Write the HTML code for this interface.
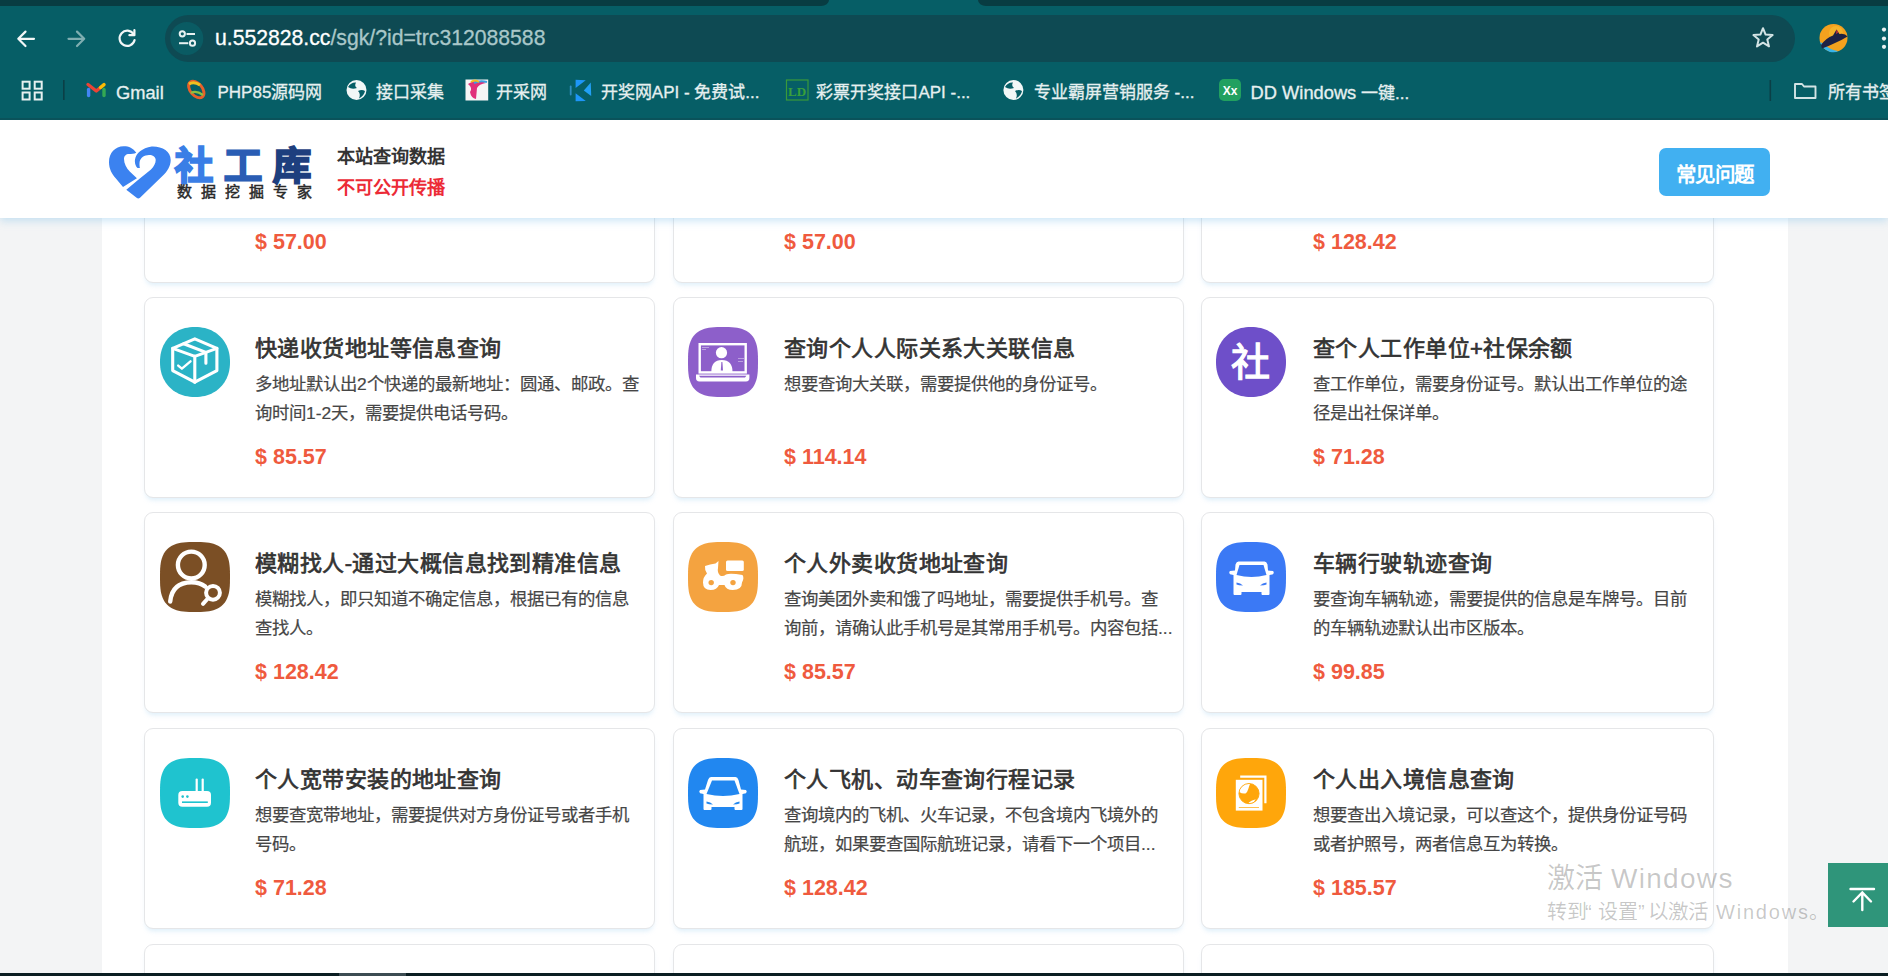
<!DOCTYPE html>
<html lang="zh-CN"><head><meta charset="utf-8"><style>
*{box-sizing:border-box;margin:0;padding:0}
html,body{width:1888px;height:976px;overflow:hidden}
body{position:relative;background:#f3f4f5;font-family:"Liberation Sans",sans-serif}
.a{position:absolute}
svg{display:block}
.card{position:absolute;width:511px;height:201px;border:1px solid #e5e6e8;border-radius:9px;background:#fff;box-shadow:0 4px 5px -2px rgba(170,212,240,.4)}
.card .ic{position:absolute;left:15px;top:29px;width:70px;height:70px}
.card .tt{position:absolute;left:110px;top:37px;font-size:22px;letter-spacing:0.42px;line-height:28px;font-weight:normal;-webkit-text-stroke:0.7px #333;color:#333;white-space:nowrap}
.card .ds{position:absolute;left:110px;font-size:17.4px;line-height:28px;color:#464646;-webkit-text-stroke:0.2px #464646;white-space:nowrap}
.card .pr{position:absolute;left:110px;top:145px;font-size:21.5px;line-height:28px;font-weight:bold;color:#ef5a3e;white-space:nowrap}
#chrome{left:0;top:0;width:1888px;height:120px;background:#065e66}
#tabs{left:0;top:0;width:829px;height:6px;background:#083c42;border-bottom-right-radius:8px 6px}
#tabgap{left:978px;top:0;width:910px;height:6px;background:#083c42;border-bottom-left-radius:8px 6px}
#pill{left:165px;top:15px;width:1630px;height:47px;border-radius:24px;background:#0e4a53}
#url{left:215px;top:23.5px;font-size:21.2px;line-height:28px;color:#fff;-webkit-text-stroke:0.3px #fff;white-space:nowrap}
#url span{color:#a9c7c9;-webkit-text-stroke:0.3px #a9c7c9}
.bm{position:absolute;top:82px;font-size:17px;line-height:22px;color:#e6f0f0;-webkit-text-stroke:0.3px #e6f0f0;white-space:nowrap}
#bmline{left:0;top:118px;width:1888px;height:2px;background:#0a525a}
#page{left:102px;top:120px;width:1686px;height:856px;background:#fff}
#header{left:0;top:120px;width:1888px;height:98px;background:#fff;box-shadow:0 3px 8px rgba(130,195,235,.4)}
#bottom{left:0;top:973px;width:1888px;height:3px;background:#0b1e22}
#bottom2{left:339px;top:973px;width:67px;height:3px;background:#3c4c52}
.h1{left:337px;font-size:18.1px;line-height:24px;font-weight:bold;white-space:nowrap}
#faq{left:1659px;top:148px;width:111px;height:48px;border-radius:7px;background:#41b0f1;color:#fff;font-size:20.5px;font-weight:bold;line-height:54px;letter-spacing:-0.5px;text-align:center}
#totop{left:1828px;top:863px;width:60px;height:64px;background:#2f957a}
.wm{color:rgba(0,0,0,.22);white-space:nowrap;left:1547px}
</style></head><body>
<div id="page" class="a"></div>
<div class="card" style="left:144px;top:82px;width:511px"><div class="pr" style="top:145px;left:110px">$ 57.00</div></div><div class="card" style="left:673px;top:82px;width:511px"><div class="pr" style="top:145px;left:110px">$ 57.00</div></div><div class="card" style="left:1201px;top:82px;width:513px"><div class="pr" style="top:145px;left:111px">$ 128.42</div></div><div class="card" style="left:144px;top:297px;width:511px"><div class="ic" style="left:15px"><svg width="70" height="70" viewBox="0 0 70 70"><path d="M70.00 35.00 L69.93 37.77 L69.72 40.27 L69.37 42.65 L68.89 44.95 L68.27 47.18 L67.51 49.32 L66.63 51.39 L65.62 53.37 L64.48 55.26 L63.22 57.06 L61.84 58.76 L60.35 60.35 L58.76 61.84 L57.06 63.22 L55.26 64.48 L53.37 65.62 L51.39 66.63 L49.32 67.51 L47.18 68.27 L44.95 68.89 L42.65 69.37 L40.27 69.72 L37.77 69.93 L35.00 70.00 L32.23 69.93 L29.73 69.72 L27.35 69.37 L25.05 68.89 L22.82 68.27 L20.68 67.51 L18.61 66.63 L16.63 65.62 L14.74 64.48 L12.94 63.22 L11.24 61.84 L9.65 60.35 L8.16 58.76 L6.78 57.06 L5.52 55.26 L4.38 53.37 L3.37 51.39 L2.49 49.32 L1.73 47.18 L1.11 44.95 L0.63 42.65 L0.28 40.27 L0.07 37.77 L0.00 35.00 L0.07 32.23 L0.28 29.73 L0.63 27.35 L1.11 25.05 L1.73 22.82 L2.49 20.68 L3.37 18.61 L4.38 16.63 L5.52 14.74 L6.78 12.94 L8.16 11.24 L9.65 9.65 L11.24 8.16 L12.94 6.78 L14.74 5.52 L16.63 4.38 L18.61 3.37 L20.68 2.49 L22.82 1.73 L25.05 1.11 L27.35 0.63 L29.73 0.28 L32.23 0.07 L35.00 0.00 L37.77 0.07 L40.27 0.28 L42.65 0.63 L44.95 1.11 L47.18 1.73 L49.32 2.49 L51.39 3.37 L53.37 4.38 L55.26 5.52 L57.06 6.78 L58.76 8.16 L60.35 9.65 L61.84 11.24 L63.22 12.94 L64.48 14.74 L65.62 16.63 L66.63 18.61 L67.51 20.68 L68.27 22.82 L68.89 25.05 L69.37 27.35 L69.72 29.73 L69.93 32.23Z" fill="#2bb3c6"/>
<g fill="none" stroke="#fff" stroke-width="3.1" stroke-linejoin="round" stroke-linecap="round">
<path d="M34.8 11.9 L56.9 21.4 L56.9 43.6 L34.8 55.2 L12.7 43.6 L12.7 21.4 Z"/>
<path d="M12.7 21.4 L34.8 29.4 L56.9 21.4 M34.8 29.4 L34.8 55.2"/>
<path d="M23.7 16.8 L45.9 25.4 L45.9 36.2"/>
<path d="M18.2 38.6 L21.9 41.7 L30.5 34.3" stroke-width="2.4"/>
</g></svg></div><div class="tt" style="left:110px">快递收货地址等信息查询</div><div class="ds" style="top:72.0px;left:110px">多地址默认出2个快递的最新地址：圆通、邮政。查</div><div class="ds" style="top:100.5px;left:110px">询时间1-2天，需要提供电话号码。</div><div class="pr" style="left:110px">$ 85.57</div></div><div class="card" style="left:673px;top:297px;width:511px"><div class="ic" style="left:14px"><svg width="70" height="70" viewBox="0 0 70 70"><path d="M70.00 35.00 L69.95 40.68 L69.80 44.01 L69.55 46.77 L69.20 49.21 L68.75 51.42 L68.20 53.45 L67.55 55.32 L66.80 57.05 L65.95 58.65 L64.99 60.14 L63.94 61.51 L62.78 62.78 L61.51 63.94 L60.14 64.99 L58.65 65.95 L57.05 66.80 L55.32 67.55 L53.45 68.20 L51.42 68.75 L49.21 69.20 L46.77 69.55 L44.01 69.80 L40.68 69.95 L35.00 70.00 L29.32 69.95 L25.99 69.80 L23.23 69.55 L20.79 69.20 L18.58 68.75 L16.55 68.20 L14.68 67.55 L12.95 66.80 L11.35 65.95 L9.86 64.99 L8.49 63.94 L7.22 62.78 L6.06 61.51 L5.01 60.14 L4.05 58.65 L3.20 57.05 L2.45 55.32 L1.80 53.45 L1.25 51.42 L0.80 49.21 L0.45 46.77 L0.20 44.01 L0.05 40.68 L0.00 35.00 L0.05 29.32 L0.20 25.99 L0.45 23.23 L0.80 20.79 L1.25 18.58 L1.80 16.55 L2.45 14.68 L3.20 12.95 L4.05 11.35 L5.01 9.86 L6.06 8.49 L7.22 7.22 L8.49 6.06 L9.86 5.01 L11.35 4.05 L12.95 3.20 L14.68 2.45 L16.55 1.80 L18.58 1.25 L20.79 0.80 L23.23 0.45 L25.99 0.20 L29.32 0.05 L35.00 0.00 L40.68 0.05 L44.01 0.20 L46.77 0.45 L49.21 0.80 L51.42 1.25 L53.45 1.80 L55.32 2.45 L57.05 3.20 L58.65 4.05 L60.14 5.01 L61.51 6.06 L62.78 7.22 L63.94 8.49 L64.99 9.86 L65.95 11.35 L66.80 12.95 L67.55 14.68 L68.20 16.55 L68.75 18.58 L69.20 20.79 L69.55 23.23 L69.80 25.99 L69.95 29.32Z" fill="#8d5fca"/>
<g fill="none" stroke="#fff" stroke-width="2.4">
<rect x="11.7" y="17.2" width="46" height="28.2"/>
</g>
<path d="M8 47.6 L61.4 47.6 L61.4 51 Q61.4 54.4 58 54.4 L11.4 54.4 Q8 54.4 8 51 Z" fill="#fff"/>
<path d="M11 48.8 L58.4 48.8 L57 50.6 L12.4 50.6 Z" fill="#8d5fca"/>
<circle cx="33.5" cy="25.7" r="5.6" fill="#fff"/>
<path d="M23.3 45 Q23.3 33 33.8 33 Q44.5 33 44.5 45 Z" fill="#fff"/>
<path d="M33.4 35 L34.4 35 L35 43.5 L32.8 43.5 Z" fill="#8d5fca"/>
<g fill="#fff" opacity=".5"><rect x="14" y="20" width="7" height=".8"/><rect x="14" y="22" width="4" height=".8"/><rect x="50" y="31" width="6" height=".8"/><rect x="50" y="34" width="5" height=".8"/></g>
</svg></div><div class="tt" style="left:110px">查询个人人际关系大关联信息</div><div class="ds" style="top:72.0px;left:110px">想要查询大关联，需要提供他的身份证号。</div><div class="pr" style="left:110px">$ 114.14</div></div><div class="card" style="left:1201px;top:297px;width:513px"><div class="ic" style="left:14px"><svg width="70" height="70" viewBox="0 0 70 70"><path d="M70.00 35.00 L69.93 37.77 L69.72 40.27 L69.37 42.65 L68.89 44.95 L68.27 47.18 L67.51 49.32 L66.63 51.39 L65.62 53.37 L64.48 55.26 L63.22 57.06 L61.84 58.76 L60.35 60.35 L58.76 61.84 L57.06 63.22 L55.26 64.48 L53.37 65.62 L51.39 66.63 L49.32 67.51 L47.18 68.27 L44.95 68.89 L42.65 69.37 L40.27 69.72 L37.77 69.93 L35.00 70.00 L32.23 69.93 L29.73 69.72 L27.35 69.37 L25.05 68.89 L22.82 68.27 L20.68 67.51 L18.61 66.63 L16.63 65.62 L14.74 64.48 L12.94 63.22 L11.24 61.84 L9.65 60.35 L8.16 58.76 L6.78 57.06 L5.52 55.26 L4.38 53.37 L3.37 51.39 L2.49 49.32 L1.73 47.18 L1.11 44.95 L0.63 42.65 L0.28 40.27 L0.07 37.77 L0.00 35.00 L0.07 32.23 L0.28 29.73 L0.63 27.35 L1.11 25.05 L1.73 22.82 L2.49 20.68 L3.37 18.61 L4.38 16.63 L5.52 14.74 L6.78 12.94 L8.16 11.24 L9.65 9.65 L11.24 8.16 L12.94 6.78 L14.74 5.52 L16.63 4.38 L18.61 3.37 L20.68 2.49 L22.82 1.73 L25.05 1.11 L27.35 0.63 L29.73 0.28 L32.23 0.07 L35.00 0.00 L37.77 0.07 L40.27 0.28 L42.65 0.63 L44.95 1.11 L47.18 1.73 L49.32 2.49 L51.39 3.37 L53.37 4.38 L55.26 5.52 L57.06 6.78 L58.76 8.16 L60.35 9.65 L61.84 11.24 L63.22 12.94 L64.48 14.74 L65.62 16.63 L66.63 18.61 L67.51 20.68 L68.27 22.82 L68.89 25.05 L69.37 27.35 L69.72 29.73 L69.93 32.23Z" fill="#6e4fc9"/><text x="34" y="49" text-anchor="middle" font-size="39" fill="#fff" stroke="#fff" stroke-width="1.3" font-family="Liberation Sans, sans-serif">社</text></svg></div><div class="tt" style="left:111px">查个人工作单位+社保余额</div><div class="ds" style="top:72.0px;left:111px">查工作单位，需要身份证号。默认出工作单位的途</div><div class="ds" style="top:100.5px;left:111px">径是出社保详单。</div><div class="pr" style="left:111px">$ 71.28</div></div><div class="card" style="left:144px;top:512px;width:511px"><div class="ic" style="left:15px"><svg width="70" height="70" viewBox="0 0 70 70"><path d="M70.00 35.00 L69.95 40.68 L69.80 44.01 L69.55 46.77 L69.20 49.21 L68.75 51.42 L68.20 53.45 L67.55 55.32 L66.80 57.05 L65.95 58.65 L64.99 60.14 L63.94 61.51 L62.78 62.78 L61.51 63.94 L60.14 64.99 L58.65 65.95 L57.05 66.80 L55.32 67.55 L53.45 68.20 L51.42 68.75 L49.21 69.20 L46.77 69.55 L44.01 69.80 L40.68 69.95 L35.00 70.00 L29.32 69.95 L25.99 69.80 L23.23 69.55 L20.79 69.20 L18.58 68.75 L16.55 68.20 L14.68 67.55 L12.95 66.80 L11.35 65.95 L9.86 64.99 L8.49 63.94 L7.22 62.78 L6.06 61.51 L5.01 60.14 L4.05 58.65 L3.20 57.05 L2.45 55.32 L1.80 53.45 L1.25 51.42 L0.80 49.21 L0.45 46.77 L0.20 44.01 L0.05 40.68 L0.00 35.00 L0.05 29.32 L0.20 25.99 L0.45 23.23 L0.80 20.79 L1.25 18.58 L1.80 16.55 L2.45 14.68 L3.20 12.95 L4.05 11.35 L5.01 9.86 L6.06 8.49 L7.22 7.22 L8.49 6.06 L9.86 5.01 L11.35 4.05 L12.95 3.20 L14.68 2.45 L16.55 1.80 L18.58 1.25 L20.79 0.80 L23.23 0.45 L25.99 0.20 L29.32 0.05 L35.00 0.00 L40.68 0.05 L44.01 0.20 L46.77 0.45 L49.21 0.80 L51.42 1.25 L53.45 1.80 L55.32 2.45 L57.05 3.20 L58.65 4.05 L60.14 5.01 L61.51 6.06 L62.78 7.22 L63.94 8.49 L64.99 9.86 L65.95 11.35 L66.80 12.95 L67.55 14.68 L68.20 16.55 L68.75 18.58 L69.20 20.79 L69.55 23.23 L69.80 25.99 L69.95 29.32Z" fill="#7b4f25"/>
<g fill="none" stroke="#fff" stroke-width="4.4" stroke-linecap="round">
<circle cx="31.3" cy="23" r="13.4"/>
<path d="M10.2 59.5 Q12 40.5 31.3 40.2 Q40 40.2 45.2 44.5"/>
<circle cx="53" cy="50.8" r="6.9" stroke-width="4"/>
<path d="M47.8 56.5 L43 61.8" stroke-width="4"/>
</g></svg></div><div class="tt" style="left:110px">模糊找人-通过大概信息找到精准信息</div><div class="ds" style="top:72.0px;left:110px">模糊找人，即只知道不确定信息，根据已有的信息</div><div class="ds" style="top:100.5px;left:110px">查找人。</div><div class="pr" style="left:110px">$ 128.42</div></div><div class="card" style="left:673px;top:512px;width:511px"><div class="ic" style="left:14px"><svg width="70" height="70" viewBox="0 0 70 70"><path d="M70.00 35.00 L69.95 40.68 L69.80 44.01 L69.55 46.77 L69.20 49.21 L68.75 51.42 L68.20 53.45 L67.55 55.32 L66.80 57.05 L65.95 58.65 L64.99 60.14 L63.94 61.51 L62.78 62.78 L61.51 63.94 L60.14 64.99 L58.65 65.95 L57.05 66.80 L55.32 67.55 L53.45 68.20 L51.42 68.75 L49.21 69.20 L46.77 69.55 L44.01 69.80 L40.68 69.95 L35.00 70.00 L29.32 69.95 L25.99 69.80 L23.23 69.55 L20.79 69.20 L18.58 68.75 L16.55 68.20 L14.68 67.55 L12.95 66.80 L11.35 65.95 L9.86 64.99 L8.49 63.94 L7.22 62.78 L6.06 61.51 L5.01 60.14 L4.05 58.65 L3.20 57.05 L2.45 55.32 L1.80 53.45 L1.25 51.42 L0.80 49.21 L0.45 46.77 L0.20 44.01 L0.05 40.68 L0.00 35.00 L0.05 29.32 L0.20 25.99 L0.45 23.23 L0.80 20.79 L1.25 18.58 L1.80 16.55 L2.45 14.68 L3.20 12.95 L4.05 11.35 L5.01 9.86 L6.06 8.49 L7.22 7.22 L8.49 6.06 L9.86 5.01 L11.35 4.05 L12.95 3.20 L14.68 2.45 L16.55 1.80 L18.58 1.25 L20.79 0.80 L23.23 0.45 L25.99 0.20 L29.32 0.05 L35.00 0.00 L40.68 0.05 L44.01 0.20 L46.77 0.45 L49.21 0.80 L51.42 1.25 L53.45 1.80 L55.32 2.45 L57.05 3.20 L58.65 4.05 L60.14 5.01 L61.51 6.06 L62.78 7.22 L63.94 8.49 L64.99 9.86 L65.95 11.35 L66.80 12.95 L67.55 14.68 L68.20 16.55 L68.75 18.58 L69.20 20.79 L69.55 23.23 L69.80 25.99 L69.95 29.32Z" fill="#f4a340"/>
<g fill="#fff">
<rect x="38" y="18.5" width="17.8" height="10.5" rx="1.5"/>
<path d="M17 24 Q22 22 27.5 21.5 L30.5 19 L30 26 Q29 30 32 33.5 Q35 35 38 32.5 Q42 31 54.5 33 Q56.5 36 54 40.5 Q54 48 44.8 48 Q38 48 36.5 43 L31 43 Q29 48 22.6 48 Q15 48 15 40.5 Q15 35 19 31.5 Q16.5 28 17 24 Z"/>
</g>
<circle cx="23.2" cy="40.6" r="2.7" fill="#f4a340"/>
<circle cx="45" cy="40.6" r="2.7" fill="#f4a340"/>
</svg></div><div class="tt" style="left:110px">个人外卖收货地址查询</div><div class="ds" style="top:72.0px;left:110px">查询美团外卖和饿了吗地址，需要提供手机号。查</div><div class="ds" style="top:100.5px;left:110px">询前，请确认此手机号是其常用手机号。内容包括...</div><div class="pr" style="left:110px">$ 85.57</div></div><div class="card" style="left:1201px;top:512px;width:513px"><div class="ic" style="left:14px"><svg width="70" height="70" viewBox="0 0 70 70"><path d="M70.00 35.00 L69.95 40.68 L69.80 44.01 L69.55 46.77 L69.20 49.21 L68.75 51.42 L68.20 53.45 L67.55 55.32 L66.80 57.05 L65.95 58.65 L64.99 60.14 L63.94 61.51 L62.78 62.78 L61.51 63.94 L60.14 64.99 L58.65 65.95 L57.05 66.80 L55.32 67.55 L53.45 68.20 L51.42 68.75 L49.21 69.20 L46.77 69.55 L44.01 69.80 L40.68 69.95 L35.00 70.00 L29.32 69.95 L25.99 69.80 L23.23 69.55 L20.79 69.20 L18.58 68.75 L16.55 68.20 L14.68 67.55 L12.95 66.80 L11.35 65.95 L9.86 64.99 L8.49 63.94 L7.22 62.78 L6.06 61.51 L5.01 60.14 L4.05 58.65 L3.20 57.05 L2.45 55.32 L1.80 53.45 L1.25 51.42 L0.80 49.21 L0.45 46.77 L0.20 44.01 L0.05 40.68 L0.00 35.00 L0.05 29.32 L0.20 25.99 L0.45 23.23 L0.80 20.79 L1.25 18.58 L1.80 16.55 L2.45 14.68 L3.20 12.95 L4.05 11.35 L5.01 9.86 L6.06 8.49 L7.22 7.22 L8.49 6.06 L9.86 5.01 L11.35 4.05 L12.95 3.20 L14.68 2.45 L16.55 1.80 L18.58 1.25 L20.79 0.80 L23.23 0.45 L25.99 0.20 L29.32 0.05 L35.00 0.00 L40.68 0.05 L44.01 0.20 L46.77 0.45 L49.21 0.80 L51.42 1.25 L53.45 1.80 L55.32 2.45 L57.05 3.20 L58.65 4.05 L60.14 5.01 L61.51 6.06 L62.78 7.22 L63.94 8.49 L64.99 9.86 L65.95 11.35 L66.80 12.95 L67.55 14.68 L68.20 16.55 L68.75 18.58 L69.20 20.79 L69.55 23.23 L69.80 25.99 L69.95 29.32Z" fill="#3b79f5"/>
<path fill="#fff" d="M22.5 19.5 L48.5 19.5 Q50.5 19.5 51.5 22.5 L52.0 28.5 L57.0 29.0 Q58.5 30.5 57.0 32.3 L53.5 33.0 L53.5 52 Q53.5 53 52.5 53 L46.5 53 Q45.5 53 45.5 52 L45.5 50 L25.5 50 L25.5 52 Q25.5 53 24.5 53 L18.5 53 Q17.5 53 17.5 52 L17.5 33.0 L14.0 32.3 Q12.5 30.5 14.0 29.0 L19.0 28.5 L19.5 22.5 Q20.5 19.5 22.5 19.5 Z"/>
<path fill="#3b79f5" d="M23.5 23.0 L47.5 23.0 L50.5 33.0 Q35.5 37.0 20.5 33.0 Z"/>
<path fill="#3b79f5" d="M20.5 40.5 Q24.5 41.0 27.0 43.5 Q22.5 43.5 20.5 42.5 Z"/>
<path fill="#3b79f5" d="M50.5 40.5 Q46.5 41.0 44.0 43.5 Q48.5 43.5 50.5 42.5 Z"/>
</svg></div><div class="tt" style="left:111px">车辆行驶轨迹查询</div><div class="ds" style="top:72.0px;left:111px">要查询车辆轨迹，需要提供的信息是车牌号。目前</div><div class="ds" style="top:100.5px;left:111px">的车辆轨迹默认出市区版本。</div><div class="pr" style="left:111px">$ 99.85</div></div><div class="card" style="left:144px;top:728px;width:511px"><div class="ic" style="left:15px"><svg width="70" height="70" viewBox="0 0 70 70"><path d="M70.00 35.00 L69.95 40.68 L69.80 44.01 L69.55 46.77 L69.20 49.21 L68.75 51.42 L68.20 53.45 L67.55 55.32 L66.80 57.05 L65.95 58.65 L64.99 60.14 L63.94 61.51 L62.78 62.78 L61.51 63.94 L60.14 64.99 L58.65 65.95 L57.05 66.80 L55.32 67.55 L53.45 68.20 L51.42 68.75 L49.21 69.20 L46.77 69.55 L44.01 69.80 L40.68 69.95 L35.00 70.00 L29.32 69.95 L25.99 69.80 L23.23 69.55 L20.79 69.20 L18.58 68.75 L16.55 68.20 L14.68 67.55 L12.95 66.80 L11.35 65.95 L9.86 64.99 L8.49 63.94 L7.22 62.78 L6.06 61.51 L5.01 60.14 L4.05 58.65 L3.20 57.05 L2.45 55.32 L1.80 53.45 L1.25 51.42 L0.80 49.21 L0.45 46.77 L0.20 44.01 L0.05 40.68 L0.00 35.00 L0.05 29.32 L0.20 25.99 L0.45 23.23 L0.80 20.79 L1.25 18.58 L1.80 16.55 L2.45 14.68 L3.20 12.95 L4.05 11.35 L5.01 9.86 L6.06 8.49 L7.22 7.22 L8.49 6.06 L9.86 5.01 L11.35 4.05 L12.95 3.20 L14.68 2.45 L16.55 1.80 L18.58 1.25 L20.79 0.80 L23.23 0.45 L25.99 0.20 L29.32 0.05 L35.00 0.00 L40.68 0.05 L44.01 0.20 L46.77 0.45 L49.21 0.80 L51.42 1.25 L53.45 1.80 L55.32 2.45 L57.05 3.20 L58.65 4.05 L60.14 5.01 L61.51 6.06 L62.78 7.22 L63.94 8.49 L64.99 9.86 L65.95 11.35 L66.80 12.95 L67.55 14.68 L68.20 16.55 L68.75 18.58 L69.20 20.79 L69.55 23.23 L69.80 25.99 L69.95 29.32Z" fill="#1fc3cf"/>
<rect x="18.3" y="33.1" width="32.7" height="15.6" rx="4" fill="#fff"/>
<rect x="35.6" y="20.5" width="2.2" height="13.5" rx="1" fill="#fff"/>
<rect x="41.6" y="20.5" width="2.2" height="13.5" rx="1" fill="#fff"/>
<circle cx="22.7" cy="38.6" r="1.3" fill="#1fc3cf"/>
<circle cx="27.4" cy="38.6" r="1.3" fill="#1fc3cf"/>
<rect x="22" y="43.4" width="25.8" height="1.6" fill="#1fc3cf"/>
</svg></div><div class="tt" style="left:110px">个人宽带安装的地址查询</div><div class="ds" style="top:72.0px;left:110px">想要查宽带地址，需要提供对方身份证号或者手机</div><div class="ds" style="top:100.5px;left:110px">号码。</div><div class="pr" style="left:110px">$ 71.28</div></div><div class="card" style="left:673px;top:728px;width:511px"><div class="ic" style="left:14px"><svg width="70" height="70" viewBox="0 0 70 70"><path d="M70.00 35.00 L69.95 40.68 L69.80 44.01 L69.55 46.77 L69.20 49.21 L68.75 51.42 L68.20 53.45 L67.55 55.32 L66.80 57.05 L65.95 58.65 L64.99 60.14 L63.94 61.51 L62.78 62.78 L61.51 63.94 L60.14 64.99 L58.65 65.95 L57.05 66.80 L55.32 67.55 L53.45 68.20 L51.42 68.75 L49.21 69.20 L46.77 69.55 L44.01 69.80 L40.68 69.95 L35.00 70.00 L29.32 69.95 L25.99 69.80 L23.23 69.55 L20.79 69.20 L18.58 68.75 L16.55 68.20 L14.68 67.55 L12.95 66.80 L11.35 65.95 L9.86 64.99 L8.49 63.94 L7.22 62.78 L6.06 61.51 L5.01 60.14 L4.05 58.65 L3.20 57.05 L2.45 55.32 L1.80 53.45 L1.25 51.42 L0.80 49.21 L0.45 46.77 L0.20 44.01 L0.05 40.68 L0.00 35.00 L0.05 29.32 L0.20 25.99 L0.45 23.23 L0.80 20.79 L1.25 18.58 L1.80 16.55 L2.45 14.68 L3.20 12.95 L4.05 11.35 L5.01 9.86 L6.06 8.49 L7.22 7.22 L8.49 6.06 L9.86 5.01 L11.35 4.05 L12.95 3.20 L14.68 2.45 L16.55 1.80 L18.58 1.25 L20.79 0.80 L23.23 0.45 L25.99 0.20 L29.32 0.05 L35.00 0.00 L40.68 0.05 L44.01 0.20 L46.77 0.45 L49.21 0.80 L51.42 1.25 L53.45 1.80 L55.32 2.45 L57.05 3.20 L58.65 4.05 L60.14 5.01 L61.51 6.06 L62.78 7.22 L63.94 8.49 L64.99 9.86 L65.95 11.35 L66.80 12.95 L67.55 14.68 L68.20 16.55 L68.75 18.58 L69.20 20.79 L69.55 23.23 L69.80 25.99 L69.95 29.32Z" fill="#2187f0"/>
<path fill="#fff" d="M23 19 L47.5 19 Q49.5 19 50.5 22 L53.0 31.5 L58.0 32.0 Q59.5 33.5 58.0 35.3 L54.5 36.0 L54.5 51 Q54.5 52 53.5 52 L47.5 52 Q46.5 52 46.5 51 L46.5 49 L23.5 49 L23.5 51 Q23.5 52 22.5 52 L16.5 52 Q15.5 52 15.5 51 L15.5 36.0 L12.0 35.3 Q10.5 33.5 12.0 32.0 L17.0 31.5 L20 22 Q21 19 23 19 Z"/>
<path fill="#2187f0" d="M24 22.5 L46.5 22.5 L51.5 36.0 Q35.0 40.0 18.5 36.0 Z"/>
<path fill="#2187f0" d="M18.5 43.5 Q22.5 44.0 25.0 46.5 Q20.5 46.5 18.5 45.5 Z"/>
<path fill="#2187f0" d="M51.5 43.5 Q47.5 44.0 45.0 46.5 Q49.5 46.5 51.5 45.5 Z"/>
</svg></div><div class="tt" style="left:110px">个人飞机、动车查询行程记录</div><div class="ds" style="top:72.0px;left:110px">查询境内的飞机、火车记录，不包含境内飞境外的</div><div class="ds" style="top:100.5px;left:110px">航班，如果要查国际航班记录，请看下一个项目...</div><div class="pr" style="left:110px">$ 128.42</div></div><div class="card" style="left:1201px;top:728px;width:513px"><div class="ic" style="left:14px"><svg width="70" height="70" viewBox="0 0 70 70"><path d="M70.00 35.00 L69.95 40.68 L69.80 44.01 L69.55 46.77 L69.20 49.21 L68.75 51.42 L68.20 53.45 L67.55 55.32 L66.80 57.05 L65.95 58.65 L64.99 60.14 L63.94 61.51 L62.78 62.78 L61.51 63.94 L60.14 64.99 L58.65 65.95 L57.05 66.80 L55.32 67.55 L53.45 68.20 L51.42 68.75 L49.21 69.20 L46.77 69.55 L44.01 69.80 L40.68 69.95 L35.00 70.00 L29.32 69.95 L25.99 69.80 L23.23 69.55 L20.79 69.20 L18.58 68.75 L16.55 68.20 L14.68 67.55 L12.95 66.80 L11.35 65.95 L9.86 64.99 L8.49 63.94 L7.22 62.78 L6.06 61.51 L5.01 60.14 L4.05 58.65 L3.20 57.05 L2.45 55.32 L1.80 53.45 L1.25 51.42 L0.80 49.21 L0.45 46.77 L0.20 44.01 L0.05 40.68 L0.00 35.00 L0.05 29.32 L0.20 25.99 L0.45 23.23 L0.80 20.79 L1.25 18.58 L1.80 16.55 L2.45 14.68 L3.20 12.95 L4.05 11.35 L5.01 9.86 L6.06 8.49 L7.22 7.22 L8.49 6.06 L9.86 5.01 L11.35 4.05 L12.95 3.20 L14.68 2.45 L16.55 1.80 L18.58 1.25 L20.79 0.80 L23.23 0.45 L25.99 0.20 L29.32 0.05 L35.00 0.00 L40.68 0.05 L44.01 0.20 L46.77 0.45 L49.21 0.80 L51.42 1.25 L53.45 1.80 L55.32 2.45 L57.05 3.20 L58.65 4.05 L60.14 5.01 L61.51 6.06 L62.78 7.22 L63.94 8.49 L64.99 9.86 L65.95 11.35 L66.80 12.95 L67.55 14.68 L68.20 16.55 L68.75 18.58 L69.20 20.79 L69.55 23.23 L69.80 25.99 L69.95 29.32Z" fill="#ffa60b"/>
<path d="M24.2 17.5 L50.5 17.5 L50.5 45.3 L48.3 45.3 L48.3 19.7 L24.2 19.7 Z" fill="#fff"/>
<rect x="19.8" y="21.8" width="26.7" height="30.8" fill="#fff"/>
<circle cx="33" cy="35.6" r="10.1" fill="#ffa60b"/>
<path d="M23.3 34 Q23.5 29 27.5 26.5 Q30.5 25 34.2 25.6 Q33 28.5 32.3 31 Q31.5 34 29.5 35.5 Q26 36 23.3 34 Z M32.5 44.8 Q35 42.3 39.8 41.2 Q38.5 44 35 45.5 Z" fill="#fff"/>
<circle cx="33" cy="35.6" r="10.1" fill="none" stroke="#ffa60b" stroke-width="0.9"/>
<rect x="22.8" y="49" width="20.2" height="1" fill="#ffc050"/>
</svg></div><div class="tt" style="left:111px">个人出入境信息查询</div><div class="ds" style="top:72.0px;left:111px">想要查出入境记录，可以查这个，提供身份证号码</div><div class="ds" style="top:100.5px;left:111px">或者护照号，两者信息互为转换。</div><div class="pr" style="left:111px">$ 185.57</div></div><div class="card" style="left:144px;top:944px;width:511px"></div><div class="card" style="left:673px;top:944px;width:511px"></div><div class="card" style="left:1201px;top:944px;width:513px"></div>
<div id="header" class="a"></div>

<svg class="a" style="left:109px;top:146px" width="62" height="53" viewBox="0 0 62 53">
<path fill="#3b82f0" d="M27.3 6.8 C24 2 19.5 0.2 14.7 0.3 C6 0.5 0 7 0 16 C0 23 3 28 6.5 32 L14 41 L27.9 32.3 L21 25.8 C17.5 22 15 18 15 13 C15 10 17 8 20 8 C22.5 8 25 8 27.3 6.8 Z"/>
<path fill="#3b82f0" d="M28.5 22 C26.5 20 25.5 17 26 13.5 C27 7 33 2 42.7 0.4 C53 0 61.7 5 61.7 14 C61.7 20 58 25.5 54.7 28.7 L31 51.7 Q29.3 53.2 27.6 51.8 L17.3 43.7 L29 34 L42 23.5 C45 20.5 46.8 17 46.7 13.8 C46.5 10.5 43.5 8.8 40 8.9 C35.5 9 31.5 11.5 30.7 15.5 C30.3 18 30.5 20.5 30.9 22 Z"/>
</svg>
<div class="a" style="left:175px;top:141px;font-size:38px;line-height:50px;font-weight:bold;white-space:nowrap;letter-spacing:11px"><span style="color:#3a7ee6;-webkit-text-stroke:2.2px #3a7ee6">社</span><span style="color:#2a5db4;-webkit-text-stroke:2.2px #2a5db4">工</span><span style="color:#1e3f7e;-webkit-text-stroke:2.2px #1e3f7e">库</span></div>
<div class="a" style="left:177px;top:182px;font-size:15px;line-height:20px;font-weight:normal;-webkit-text-stroke:0.5px #2a2a2a;color:#2a2a2a;white-space:nowrap;letter-spacing:9.1px">数据挖掘专家</div>
<div class="a h1" style="top:145px;color:#333">本站查询数据</div>
<div class="a h1" style="top:175.5px;color:#ec2a36">不可公开传播</div>
<div id="faq" class="a">常见问题</div>

<div id="chrome" class="a"></div>
<div id="tabs" class="a"></div>
<div id="tabgap" class="a"></div>
<div id="pill" class="a"></div>
<div id="url" class="a">u.552828.cc<span>/sgk/?id=trc312088588</span></div>
<div id="bmline" class="a"></div>

<svg class="a" style="left:0;top:0" width="240" height="70" viewBox="0 0 240 70">
 <g fill="none" stroke="#f2f7f7" stroke-width="2.2" stroke-linecap="round" stroke-linejoin="round">
  <path d="M18.5 38.8 L34 38.8 M25.5 31.6 L18.3 38.8 L25.5 46"/>
 </g>
 <g fill="none" stroke="#7faeb1" stroke-width="2.2" stroke-linecap="round" stroke-linejoin="round">
  <path d="M68.5 38.8 L84 38.8 M77 31.6 L84.2 38.8 L77 46"/>
 </g>
 <g fill="none" stroke="#f2f7f7" stroke-width="2.2" stroke-linecap="round" stroke-linejoin="round">
  <path d="M133.6 34.2 A7.6 7.6 0 1 0 134.6 40"/>
  <path d="M134.4 30.2 L134.4 35.2 L129.4 35.2"/>
 </g>
 <circle cx="186.8" cy="38.4" r="16.5" fill="#0a5b63"/>
 <g fill="none" stroke="#e8f2f2" stroke-width="2">
  <circle cx="182.3" cy="33.8" r="2.6"/><path d="M186.5 34 L195 34"/>
  <path d="M179 43.2 L188.3 43.2"/><circle cx="192.5" cy="43.2" r="2.6"/>
 </g>
</svg>
<svg class="a" style="left:1740px;top:0" width="148" height="70" viewBox="1740 0 148 70">
 <path d="M1763 28.2 L1765.6 34.6 L1772.6 35.1 L1767.3 39.6 L1769 46.4 L1763 42.7 L1757 46.4 L1758.7 39.6 L1753.4 35.1 L1760.4 34.6 Z" fill="none" stroke="#d3e4e5" stroke-width="2" stroke-linejoin="round"/>
 <circle cx="1833.5" cy="38" r="14" fill="#f5a11e"/>
 <circle cx="1836" cy="33" r="7" fill="#f8c030" opacity=".6"/>
 <path d="M1820 42 Q1822 49 1830 52 Q1836 53 1838 51 Q1830 50 1824 44Z" fill="#39b4e8"/>
 <path d="M1821 45 Q1826 38 1833 35.5 L1836.5 29.5 L1839.5 34 Q1845 33 1847.5 36.5 Q1842 40 1835 43 Q1829 46 1822 48.5Z" fill="#1f2244"/>
 <path d="M1836.5 29.5 L1838.5 32.5 L1836 34Z" fill="#c0303a"/>
 <g fill="#e8f2f2"><circle cx="1884" cy="29.6" r="2.1"/><circle cx="1884" cy="38.6" r="2.1"/><circle cx="1884" cy="46.8" r="2.1"/></g>
</svg>


<svg class="a" style="left:0;top:66px" width="1888" height="52" viewBox="0 66 1888 52">
 <g fill="none" stroke="#e6f0f0" stroke-width="2"><rect x="22.6" y="81.7" width="7" height="7"/><rect x="34.7" y="81.7" width="7" height="7"/><rect x="22.6" y="92.5" width="7" height="7"/><rect x="34.7" y="92.5" width="7" height="7"/></g>
 <rect x="63" y="80" width="1.6" height="20" fill="#0b3f46"/>
 <g stroke-width="3.4" fill="none" stroke-linejoin="round" stroke-linecap="round">
  <path d="M88.6 89.5 L88.6 95.5" stroke="#4285f4"/>
  <path d="M104 89.5 L104 95.5" stroke="#34a853"/>
  <path d="M88 84.5 L96.3 91 L100.5 87.5" stroke="#ea4335"/>
  <path d="M100.5 87.5 L104 84.6" stroke="#fbbc04"/>
 </g>
 <ellipse cx="196.3" cy="89.5" rx="6" ry="9.5" transform="rotate(-40 196.3 89.5)" fill="none" stroke="#e8602a" stroke-width="3"/>
 <path d="M189 84 Q194 81 200 85" fill="none" stroke="#f0c020" stroke-width="3"/><path d="M191 93 Q196 90 203 95" fill="none" stroke="#8cc040" stroke-width="2.2"/>
 <circle cx="356.5" cy="90" r="10" fill="#f2f7f7"/>
 <path d="M348 87 Q351 82 356 82.5 Q354 86 357 88 Q352 90 348 87Z M358 91 Q362 89 365 91 Q364 96 359 98.5 Q361 94 358 91Z" fill="#065e66"/>
 <rect x="465.5" y="79.5" width="22.7" height="21" fill="#f5f5f5"/>
 <path d="M468 84 Q476 78 486 83 Q479 84 477 88 L476 99 Q471 98 470 92 Q473 88 468 84Z" fill="#e0307a"/>
 <path d="M474 83 Q480 80 487 82" stroke="#3ba0e0" stroke-width="2" fill="none"/>
 <path d="M471 82 Q475 79 479 82" stroke="#f0c020" stroke-width="2" fill="none"/>
 <rect x="569.8" y="85.5" width="1.8" height="10" rx=".9" fill="#3a9ad8" opacity=".8"/>
 <path d="M575.6 79.8 L585.8 80.2 L575.6 88Z M575.6 93.2 L585.8 101 L575.6 101.3Z" fill="#1e96f8"/>
 <path d="M590.8 82.5 L583.8 90.6 L591.2 96Z" fill="#22a0f4"/>
 <rect x="786.5" y="80" width="21.5" height="20" fill="none" stroke="#3a9a3a" stroke-width="1.2"/>
 <text x="797" y="95.5" text-anchor="middle" font-family="Liberation Serif, serif" font-size="13" font-weight="bold" fill="#3aa03a">LD</text>
 <circle cx="1013.4" cy="90" r="10" fill="#f2f7f7"/>
 <path d="M1005 87 Q1008 82 1013 82.5 Q1011 86 1014 88 Q1009 90 1005 87Z M1015 91 Q1019 89 1022 91 Q1021 96 1016 98.5 Q1018 94 1015 91Z" fill="#065e66"/>
 <rect x="1219" y="79" width="22" height="22" rx="5" fill="#22a060"/>
 <text x="1230" y="95" text-anchor="middle" font-family="Liberation Sans, sans-serif" font-size="12" font-weight="bold" fill="#fff">Xx</text>
 <rect x="1769.5" y="80" width="1.6" height="21" fill="#0b3f46"/>
 <path d="M1795 84 L1802 84 L1804 86.5 L1815.5 86.5 L1815.5 98 L1795 98 Z" fill="none" stroke="#d3e4e5" stroke-width="1.9" stroke-linejoin="round"/>
</svg>

<div class="bm" style="left:116px"><span style="font-size:18.3px">Gmail</span></div><div class="bm" style="left:217.5px">PHP85源码网</div><div class="bm" style="left:375.6px">接口采集</div><div class="bm" style="left:496.4px">开采网</div><div class="bm" style="left:600.8px">开奖网API - 免费试...</div><div class="bm" style="left:816.4px">彩票开奖接口API -...</div><div class="bm" style="left:1033.8px">专业霸屏营销服务 -...</div><div class="bm" style="left:1250.6px"><span style="font-size:18.3px">DD Windows</span> 一键...</div><div class="bm" style="left:1828px">所有书签</div>

<div class="a wm" style="top:859px;font-size:28px;line-height:40px">激活</div>
<div class="a wm" style="left:1611px;top:859px;font-size:28px;line-height:40px;letter-spacing:1.3px">Windows</div>
<div class="a wm" style="top:898px;font-size:20px;line-height:28px">转到</div>
<div class="a wm" style="left:1585px;top:898px;font-size:20px;line-height:28px">“</div>
<div class="a wm" style="left:1598px;top:898px;font-size:20px;line-height:28px">设置</div>
<div class="a wm" style="left:1638px;top:898px;font-size:20px;line-height:28px">”</div>
<div class="a wm" style="left:1648px;top:898px;font-size:20.5px;line-height:28px">以激活</div>
<div class="a wm" style="left:1716px;top:898px;font-size:20px;line-height:28px;letter-spacing:1.8px">Windows</div>
<div class="a wm" style="left:1809px;top:898px;font-size:20px;line-height:28px">。</div>
<div id="totop" class="a"><svg width="60" height="64" viewBox="0 0 60 64"><g stroke="#fff" stroke-width="2.4" fill="none" stroke-linecap="round"><path d="M22.5 26 L46 26"/><path d="M34.3 47 L34.3 30 M25.5 38.5 L34.3 29.5 L43 38.5"/></g></svg></div>

<div id="bottom" class="a"></div><div id="bottom2" class="a"></div>
</body></html>
